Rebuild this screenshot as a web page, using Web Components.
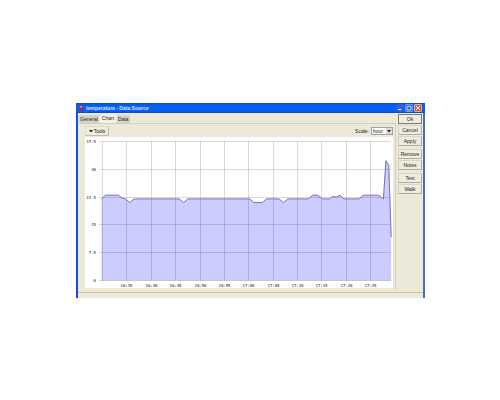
<!DOCTYPE html>
<html lang="en">
<head>
<meta charset="utf-8">
<title>temperatura - Data Source</title>
<style>
  body {
    margin: 0;
    padding: 103px 75px 20px 76px;
    background: #fff;
    color: #222;
    font: 5px/6px "Liberation Sans Narrow", "Liberation Sans", Arial, sans-serif;
  }
</style>
</head>
<body>
<data-window caption="temperatura - Data Source">
  <tab-panel slot="content">
    <tab-item slot="tabs">General</tab-item>
    <tab-item slot="tabs" selected>Chart</tab-item>
    <tab-item slot="tabs">Data</tab-item>
    <chart-toolbar></chart-toolbar>
    <time-chart></time-chart>
  </tab-panel>
  <side-button slot="actions" primary>Ok</side-button>
  <side-button slot="actions">Cancel</side-button>
  <side-button slot="actions">Apply</side-button>
  <side-button slot="actions" group>Remove</side-button>
  <side-button slot="actions">Notes</side-button>
  <side-button slot="actions" group>Test</side-button>
  <side-button slot="actions">Walk</side-button>
</data-window>

<script>
class DataWindow extends HTMLElement {
  constructor() {
    super();
    this.attachShadow({ mode: "open" });
    this.shadowRoot.innerHTML = `
    <style>
    :host{
      display: block;
      background: #ece9d8;
      border: solid #1650d0;
      border-width: 0 2px;
      border-right-color: #4a70b8;
    }
    header{
      display: flex;
      align-items: center;
      gap: 2px;
      height: 10px;
      margin: 0 -2px;
      padding: 0 3px 0 2px;
      background: linear-gradient(#0c50d8, #0862f4 35%, #0560f0 80%, #0448c8);
      color: #d4e2ff;
    }
    h1{
      flex: 1;
      margin: 0;
      font: bold 5px/8px "Liberation Sans", Arial, sans-serif;
    }
    svg{
      display: block;
    }
    .controls{
      display: flex;
      gap: 1px;
    }
    .controls button{
      width: 8px;
      height: 8px;
      padding: 0;
      border: 1px solid #6c98ec;
      border-radius: 1px;
      background: #2c64dc;
    }
    .controls .min{
      border-color: #2460dc;
    }
    .controls .close{
      background: #d8563c;
      border-color: #e4a8a0;
    }
    .body{
      display: flex;
      gap: 2px;
      padding: 1px 1px 2px 1px;
    }
    .content{
      flex: 1;
      min-width: 0;
    }
    .actions{
      display: flex;
      flex-direction: column;
      gap: 1px;
      width: 24px;
    }
    footer{
      height: 5px;
      border-top: 1px solid #c4c1b2;
    }
    </style>
    <header>
      <svg width="6" height="6" viewBox="0 0 6 6">
        <path d="M1 1.5 3.4.4 5.4 1.8 5.2 4.6 3 5.8.8 4.6z" fill="#a82838"/>
        <path d="M1.2 1.6 3.3.8 5 1.9 3 2.9z" fill="#ee8080"/>
      </svg>
      <h1></h1>
      <div class="controls">
        <button class="min" aria-label="Minimize"><svg width="6" height="6"><path d="M1 4.5h3" stroke="#fff"/></svg></button>
        <button aria-label="Maximize"><svg width="6" height="6"><path d="M1 1.5h4v3.5h-4z" fill="none" stroke="#dce8ff" stroke-width=".8"/></svg></button>
        <button class="close" aria-label="Close"><svg width="6" height="6"><path d="M1 1l4 4M5 1l-4 4" stroke="#fff"/></svg></button>
      </div>
    </header>
    <div class="body">
      <div class="content"><slot name="content"></slot></div>
      <div class="actions"><slot name="actions"></slot></div>
    </div>
    <footer></footer>
    `;
  }

  connectedCallback() {
    this.shadowRoot.querySelector("h1").textContent = this.getAttribute("caption");
  }
}
customElements.define("data-window", DataWindow);

class SideButton extends HTMLElement {
  constructor() {
    super();
    this.attachShadow({ mode: "open" });
    this.shadowRoot.innerHTML = `
    <style>
    :host{
      display: block;
    }
    :host([group]){
      margin-top: 2px;
    }
    button{
      display: block;
      width: 100%;
      height: 10px;
      padding: 0;
      border: 1px solid;
      border-color: #d8d5c6 #b0ad9f #b0ad9f #d0cdbe;
      background: #efecde;
      color: inherit;
      font: inherit;
    }
    :host([primary]) button{
      border-color: #7b7b74;
    }
    </style>
    <button><slot></slot></button>
    `;
  }
}
customElements.define("side-button", SideButton);

class TabItem extends HTMLElement {
  constructor() {
    super();
    this.attachShadow({ mode: "open" });
    this.shadowRoot.innerHTML = `
    <style>
    :host{
      display: block;
    }
    button{
      display: block;
      height: 8px;
      padding: 0 1px;
      border: 0;
      background: #d6d3c5;
      color: inherit;
      font: inherit;
    }
    :host([selected]) button{
      height: 9px;
      padding: 0 2px 1px;
      background: #f3f1e6;
    }
    </style>
    <button role="tab"><slot></slot></button>
    `;
  }
}
customElements.define("tab-item", TabItem);

class TabPanel extends HTMLElement {
  constructor() {
    super();
    this.attachShadow({ mode: "open" });
    this.shadowRoot.innerHTML = `
    <style>
    :host{
      display: block;
    }
    .tabs{
      display: flex;
      align-items: flex-end;
      gap: 1px;
    }
    .page{
      padding: 2px 2px 2px 6px;
      border: solid #d2cfc0;
      border-width: 1px 1px 0 0;
    }
    </style>
    <div class="tabs" role="tablist"><slot name="tabs"></slot></div>
    <div class="page"><slot></slot></div>
    `;
  }
}
customElements.define("tab-panel", TabPanel);

class ChartToolbar extends HTMLElement {
  constructor() {
    super();
    this.attachShadow({ mode: "open" });
    this.shadowRoot.innerHTML = `
    <style>
    :host{
      display: flex;
      align-items: center;
      justify-content: space-between;
      padding-bottom: 1px;
    }
    button{
      display: flex;
      align-items: center;
      justify-content: center;
      gap: 1px;
      width: 24px;
      height: 10px;
      padding: 0;
      border: 1px solid;
      border-color: #dedbcc #c0bdae #c0bdae #dedbcc;
      background: #efecde;
      color: inherit;
      font: inherit;
    }
    .scale{
      display: flex;
      align-items: center;
      gap: 2px;
    }
    .box{
      display: grid;
      width: 22px;
      height: 8px;
    }
    .box > *{
      grid-area: 1 / 1;
    }
    select{
      appearance: none;
      width: 100%;
      height: 8px;
      padding: 0 1px;
      border: 1px solid #9ca2a9;
      border-radius: 0;
      background: #fff;
      color: inherit;
      font: inherit;
    }
    .arrow{
      justify-self: end;
      align-self: center;
      margin-right: 1px;
      pointer-events: none;
      background: #dedbcc;
    }
    </style>
    <button><svg width="4" height="3"><path d="M0 0h4l-2 2.5z" fill="#222"/></svg>Tools</button>
    <div class="scale">
      <label for="scale">Scale:</label>
      <div class="box">
        <select id="scale"><option>hour</option><option>day</option><option>week</option></select>
        <svg class="arrow" width="6" height="6"><path d="M1 2h4l-2 2.5z" fill="#222"/></svg>
      </div>
    </div>
    `;
  }
}
customElements.define("chart-toolbar", ChartToolbar);

// [minutes after 16:30, temperature]
const READINGS = [
  [-0.2, 22], [0.6, 23], [3.3, 23], [4, 22.2], [4.7, 22], [5.6, 21], [6.5, 22],
  [15.7, 22], [16.6, 21], [17.5, 22], [30.2, 22], [31, 21], [32.8, 21],
  [33.6, 22], [36.2, 22], [37.1, 21], [38, 22], [42.2, 22], [43.1, 23],
  [44.1, 23], [45.1, 22], [46.6, 22], [47.1, 22.6], [48, 22.5], [48.7, 23],
  [49.5, 22], [52.6, 22], [53.5, 23], [56.6, 23], [57.6, 22], [58.1, 32.3],
  [58.7, 31], [59.2, 11.7]
];

class TimeChart extends HTMLElement {
  constructor() {
    super();
    this.attachShadow({ mode: "open" });
    this.shadowRoot.innerHTML = `
    <style>
    :host{
      display: block;
      background: #fff;
    }
    svg{
      display: block;
      width: 100%;
    }
    text{
      font: 4px "DejaVu Sans Mono", "Liberation Mono", monospace;
      fill: #111;
    }
    .grid{
      stroke: #46284e;
      stroke-opacity: 0.19;
    }
    .area{
      fill: #ccccff;
    }
    .line{
      fill: none;
      stroke: #7670b0;
      stroke-width: 1;
    }
    </style>
    <svg viewBox="0 0 308 151" role="img" aria-label="Temperature by time"></svg>
    `;
    this._draw();
  }

  _x(minutes) {
    return 17.5 + minutes * 4.877;
  }

  _y(value) {
    return 143.5 - value * 3.71;
  }

  _draw() {
    const points = READINGS.map(([m, v]) => `${this._x(m).toFixed(1)},${this._y(v).toFixed(1)}`);
    const bottom = this._y(0);
    let grid = "";
    let labels = "";

    // horizontal lines
    for (let v = 0; v <= 37.5; v += 7.5) {
      const y = Math.floor(this._y(v)) + 0.5;
      grid += `M14 ${y}H306`;
      labels += `<text x="11" y="${y + 1.5}" text-anchor="end">${v}</text>`;
    }
    // vertical lines, one every five minutes
    for (let m = 0; m < 60; m += 5) {
      const x = Math.floor(this._x(m)) + 0.5;
      grid += `M${x} 4V${bottom}`;
      if (m > 0) {
        const total = 16 * 60 + 30 + m;
        const label = Math.floor(total / 60) + ":" + String(total % 60).padStart(2, "0");
        labels += `<text x="${x}" y="150" text-anchor="middle">${label}</text>`;
      }
    }

    this.shadowRoot.querySelector("svg").innerHTML = `
      <polygon class="area" points="${this._x(-0.2)},${bottom} ${points.join(" ")} ${this._x(59.2)},${bottom}"/>
      <path class="grid" d="${grid}"/>
      <polyline class="line" points="${points.join(" ")}"/>
      ${labels}
    `;
  }
}
customElements.define("time-chart", TimeChart);
</script>
</body>
</html>
